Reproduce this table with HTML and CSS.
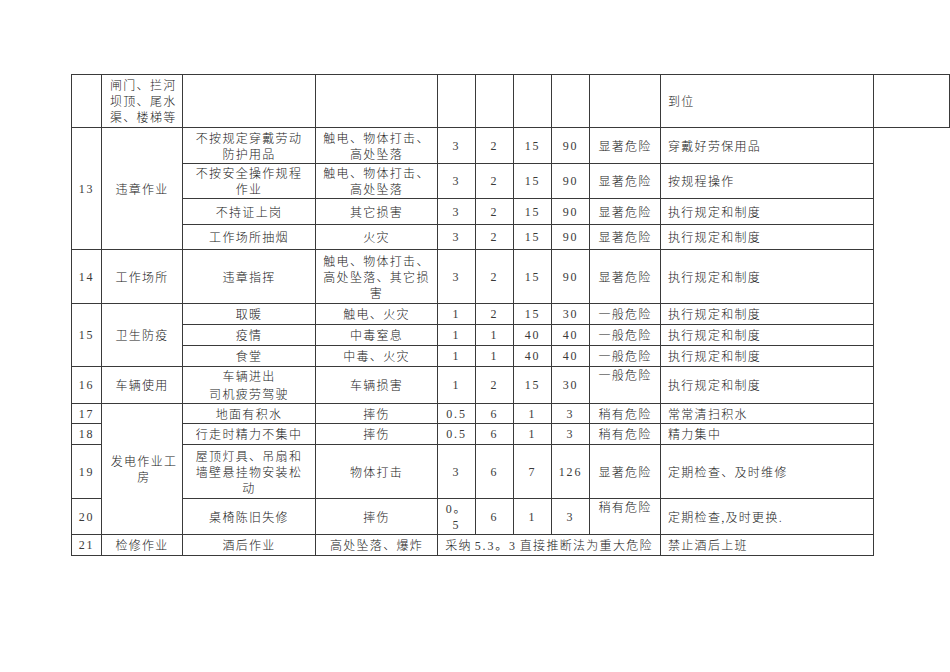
FILE: index.html
```html
<!DOCTYPE html>
<html lang="zh-CN">
<head>
<meta charset="utf-8">
<link rel="stylesheet" href="styles.css">
</head>
<body>
<div class="page">
<table class="risk">
  <colgroup>
    <col class="c-no"><col class="c-area"><col class="c-item"><col class="c-harm">
    <col class="c-n"><col class="c-n"><col class="c-n"><col class="c-n">
    <col class="c-level"><col class="c-measure"><col class="c-extra">
  </colgroup>
  <tr class="h53">
    <td></td>
    <td class="left area">闸门、拦河坝顶、尾水渠、楼梯等</td>
    <td></td><td></td><td></td><td></td><td></td><td></td><td></td>
    <td class="left">到位</td>
    <td class="extra"></td>
  </tr>
  <tr class="h36">
    <td rowspan="4" class="num">13</td>
    <td rowspan="4">违章作业</td>
    <td class="it">不按规定穿戴劳动防护用品</td>
    <td>触电、物体打击、高处坠落</td>
    <td class="num">3</td><td class="num">2</td><td class="num">15</td><td class="num">90</td>
    <td>显著危险</td>
    <td class="left">穿戴好劳保用品</td>
    <td class="none"></td>
  </tr>
  <tr class="h35">
    <td class="it">不按安全操作规程作业</td>
    <td>触电、物体打击、高处坠落</td>
    <td class="num">3</td><td class="num">2</td><td class="num">15</td><td class="num">90</td>
    <td>显著危险</td>
    <td class="left">按规程操作</td>
    <td class="none"></td>
  </tr>
  <tr class="h26">
    <td class="it">不持证上岗</td>
    <td>其它损害</td>
    <td class="num">3</td><td class="num">2</td><td class="num">15</td><td class="num">90</td>
    <td>显著危险</td>
    <td class="left">执行规定和制度</td>
    <td class="none"></td>
  </tr>
  <tr class="h25">
    <td class="it">工作场所抽烟</td>
    <td>火灾</td>
    <td class="num">3</td><td class="num">2</td><td class="num">15</td><td class="num">90</td>
    <td>显著危险</td>
    <td class="left">执行规定和制度</td>
    <td class="none"></td>
  </tr>
  <tr class="h54">
    <td class="num">14</td>
    <td>工作场所</td>
    <td class="it">违章指挥</td>
    <td>触电、物体打击、高处坠落、其它损害</td>
    <td class="num">3</td><td class="num">2</td><td class="num">15</td><td class="num">90</td>
    <td>显著危险</td>
    <td class="left">执行规定和制度</td>
    <td class="none"></td>
  </tr>
  <tr class="h21">
    <td rowspan="3" class="num">15</td>
    <td rowspan="3">卫生防疫</td>
    <td class="it">取暖</td>
    <td>触电、火灾</td>
    <td class="num">1</td><td class="num">2</td><td class="num">15</td><td class="num">30</td>
    <td>一般危险</td>
    <td class="left">执行规定和制度</td>
    <td class="none"></td>
  </tr>
  <tr class="h21">
    <td class="it">疫情</td>
    <td>中毒窒息</td>
    <td class="num">1</td><td class="num">1</td><td class="num">40</td><td class="num">40</td>
    <td>一般危险</td>
    <td class="left">执行规定和制度</td>
    <td class="none"></td>
  </tr>
  <tr class="h21">
    <td class="it">食堂</td>
    <td>中毒、火灾</td>
    <td class="num">1</td><td class="num">1</td><td class="num">40</td><td class="num">40</td>
    <td>一般危险</td>
    <td class="left">执行规定和制度</td>
    <td class="none"></td>
  </tr>
  <tr class="h37">
    <td class="num">16</td>
    <td>车辆使用</td>
    <td class="it tall">车辆进出<br>司机疲劳驾驶</td>
    <td>车辆损害</td>
    <td class="num">1</td><td class="num">2</td><td class="num">15</td><td class="num">30</td>
    <td class="top">一般危险</td>
    <td class="left">执行规定和制度</td>
    <td class="none"></td>
  </tr>
  <tr class="h20">
    <td class="num">17</td>
    <td rowspan="4" class="area">发电作业工房</td>
    <td class="it">地面有积水</td>
    <td>摔伤</td>
    <td class="num">0.5</td><td class="num">6</td><td class="num">1</td><td class="num">3</td>
    <td>稍有危险</td>
    <td class="left">常常清扫积水</td>
    <td class="none"></td>
  </tr>
  <tr class="h21">
    <td class="num">18</td>
    <td class="it">行走时精力不集中</td>
    <td>摔伤</td>
    <td class="num">0.5</td><td class="num">6</td><td class="num">1</td><td class="num">3</td>
    <td>稍有危险</td>
    <td class="left">精力集中</td>
    <td class="none"></td>
  </tr>
  <tr class="h54">
    <td class="num">19</td>
    <td class="it">屋顶灯具、吊扇和墙壁悬挂物安装松动</td>
    <td>物体打击</td>
    <td class="num">3</td><td class="num">6</td><td class="num">7</td><td class="num">126</td>
    <td>显著危险</td>
    <td class="left">定期检查、及时维修</td>
    <td class="none"></td>
  </tr>
  <tr class="h36">
    <td class="num">20</td>
    <td class="it">桌椅陈旧失修</td>
    <td>摔伤</td>
    <td class="num">0。<br>5</td><td class="num">6</td><td class="num">1</td><td class="num">3</td>
    <td class="top">稍有危险</td>
    <td class="left">定期检查,及时更换.</td>
    <td class="none"></td>
  </tr>
  <tr class="h21">
    <td class="num">21</td>
    <td>检修作业</td>
    <td class="it">酒后作业</td>
    <td>高处坠落、爆炸</td>
    <td colspan="5" class="span">采纳<span class="digits">5.3。3</span>直接推断法为重大危险</td>
    <td class="left">禁止酒后上班</td>
    <td class="none"></td>
  </tr>
</table>
</div>
</body>
</html>
```

FILE: styles.css
```css
html, body {
  margin: 0;
  padding: 0;
  background: #ffffff;
}

.page {
  padding: 74px 0 0 71px;
}

.risk {
  border-collapse: collapse;
  table-layout: fixed;
  width: 879px;
  font-family: "Noto Sans CJK SC", "Noto Sans", sans-serif;
  font-weight: 300;
  font-size: 12px;
  letter-spacing: 1.3px;
  line-height: 16px;
  color: #222222;
}

.c-no { width: 30px; }
.c-area { width: 81px; }
.c-item { width: 133px; }
.c-harm { width: 122px; }
.c-n { width: 38px; }
.c-level { width: 71px; }
.c-measure { width: 213px; }
.c-extra { width: 76px; }

.risk td {
  border: 1px solid #3a3a3a;
  padding: 0 5px;
  text-align: center;
  vertical-align: middle;
  overflow: hidden;
}

.risk td.left {
  text-align: left;
  padding-left: 7px;
}

.risk td.area {
  padding-left: 8px;
  padding-right: 4px;
}

.risk td.it {
  padding: 0 9px;
}

.risk td.tall {
  line-height: 18px;
}

.risk td.top {
  vertical-align: top;
}

.risk td.num {
  font-family: "Liberation Serif", "Noto Sans CJK SC", serif;
  font-weight: 400;
  font-size: 12px;
  letter-spacing: 1.8px;
  padding: 0 1px;
  color: #3a3a3a;
}

.risk td.span {
  padding: 0 2px;
  white-space: nowrap;
}

.digits {
  font-family: "Liberation Serif", "Noto Sans CJK SC", serif;
  font-weight: 400;
  font-size: 12px;
  letter-spacing: 1.8px;
  padding: 0 3px;
  color: #3a3a3a;
}

.risk td.none {
  border: none;
}

.h20 td { height: 19px; }
.h21 td { height: 20px; }
.h25 td { height: 24px; }
.h26 td { height: 25px; }
.h35 td { height: 34px; }
.h36 td { height: 35px; }
.h37 td { height: 36px; }
.h53 td { height: 52px; }
.h54 td { height: 53px; }
```
